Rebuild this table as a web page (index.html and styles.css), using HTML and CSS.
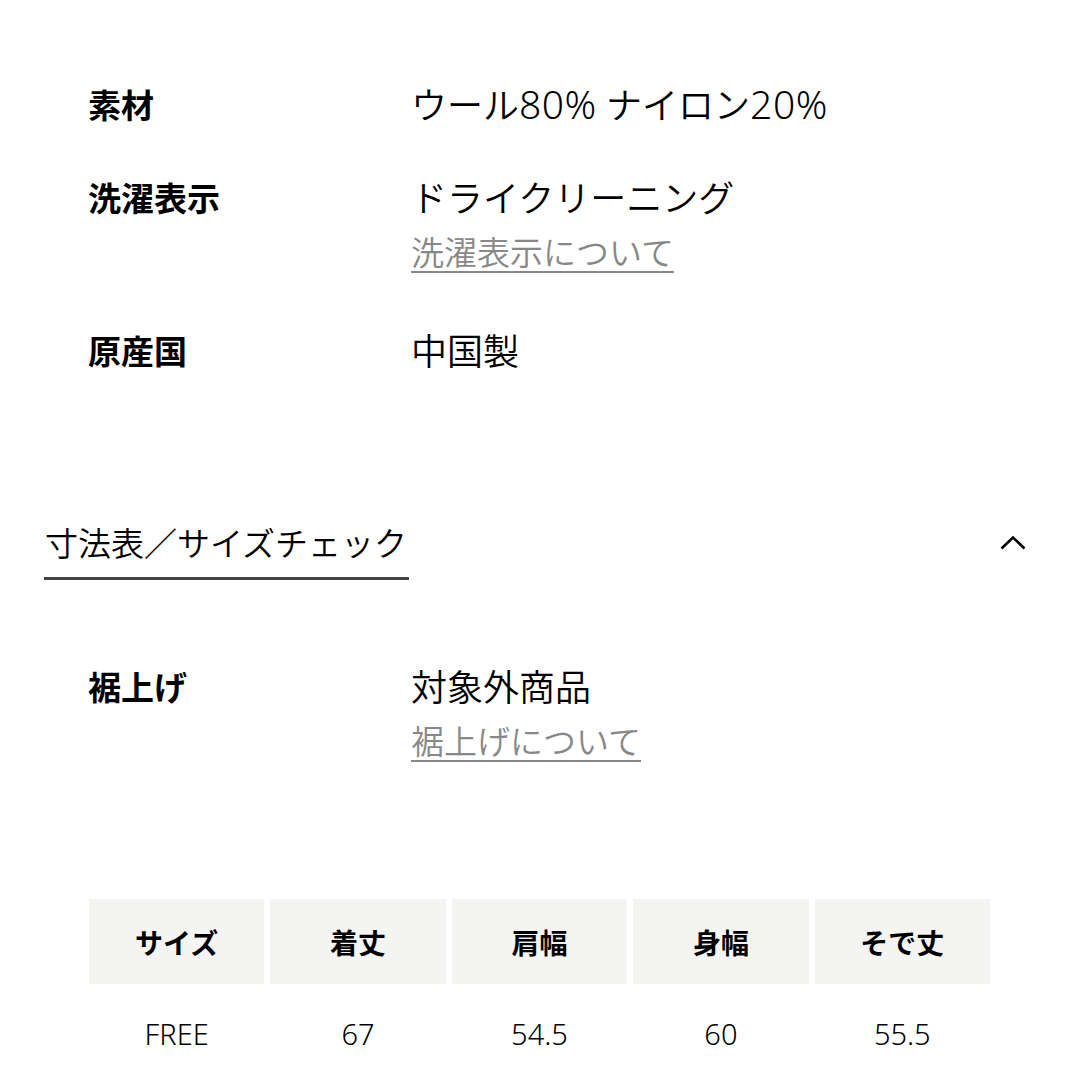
FILE: index.html
```html
<!DOCTYPE html>
<html lang="ja">
<head>
<meta charset="utf-8">
<title>商品詳細</title>
<link rel="stylesheet" href="styles.css">
</head>
<body>
<div class="page">
  <section class="spec">
    <div class="row">
      <div class="label">素材</div>
      <div class="value"><div class="main">ウール<span class="num">80%</span> ナイロン<span class="num">20%</span></div></div>
    </div>
    <div class="row">
      <div class="label">洗濯表示</div>
      <div class="value">
        <div class="main">ドライクリーニング</div>
        <a class="link" href="#">洗濯表示について</a>
      </div>
    </div>
    <div class="row">
      <div class="label">原産国</div>
      <div class="value"><div class="main">中国製</div></div>
    </div>
  </section>

  <div class="tabbar">
    <div class="tab">寸法表／サイズチェック</div>
    <svg class="chev" width="26" height="14" viewBox="0 0 26 14" aria-hidden="true">
      <polyline points="1.5,12.5 13,1.5 24.5,12.5" fill="none" stroke="#000" stroke-width="2.6" stroke-linecap="butt" stroke-linejoin="miter"/>
    </svg>
  </div>

  <section class="spec spec2">
    <div class="row">
      <div class="label">裾上げ</div>
      <div class="value">
        <div class="main">対象外商品</div>
        <a class="link" href="#">裾上げについて</a>
      </div>
    </div>
  </section>

  <div class="size-table">
    <div class="th">サイズ</div>
    <div class="th">着丈</div>
    <div class="th">肩幅</div>
    <div class="th">身幅</div>
    <div class="th">そで丈</div>
    <div class="td">FREE</div>
    <div class="td">67</div>
    <div class="td">54.5</div>
    <div class="td">60</div>
    <div class="td">55.5</div>
  </div>
</div>
</body>
</html>
```

FILE: styles.css
```css
html, body {
  margin: 0;
  padding: 0;
  background: #fff;
}

body {
  font-family: "Noto Sans", "Noto Sans CJK JP", sans-serif;
  color: #000;
  width: 1080px;
  height: 1080px;
  overflow: hidden;
}

.page {
  padding-top: 79px;
}

.spec {
  padding-left: 88px;
  display: flex;
  flex-direction: column;
  gap: 39px;
}

.row {
  display: flex;
  align-items: flex-start;
}

.label {
  width: 323px;
  flex: none;
  font-size: 33px;
  font-weight: 700;
  line-height: 54px;
}

.value {
  display: flex;
  flex-direction: column;
  align-items: flex-start;
}

.main {
  font-size: 36px;
  font-weight: 350;
  line-height: 54px;
  height: 54px;
}

.num {
  font-size: 39px;
  line-height: 1;
  letter-spacing: 0.5px;
}

.link {
  font-size: 33px;
  font-weight: 350;
  line-height: 54px;
  color: #888;
  text-decoration: underline;
  text-decoration-thickness: 2px;
  text-underline-offset: 6px;
  margin-bottom: 6px;
}

.tabbar {
  margin-top: 138px;
  padding: 0 54px 0 44px;
  display: flex;
  justify-content: space-between;
  align-items: flex-start;
}

.tab {
  font-size: 33px;
  font-weight: 350;
  line-height: 54px;
  padding: 0 2px 6px 1px;
  border-bottom: 3px solid #444;
}

.chev {
  margin-top: 19px;
  display: block;
}

.spec2 {
  margin-top: 81px;
}

.size-table {
  margin: 124px 0 0 89px;
  width: 901px;
  display: grid;
  grid-template-columns: repeat(5, 1fr);
  grid-template-rows: 85px 98px;
  column-gap: 6px;
}

.th {
  background: #f4f4f2;
  font-size: 28px;
  font-weight: 700;
  display: flex;
  align-items: center;
  justify-content: center;
}

.td {
  font-size: 29px;
  font-weight: 350;
  display: flex;
  align-items: center;
  justify-content: center;
}
```
